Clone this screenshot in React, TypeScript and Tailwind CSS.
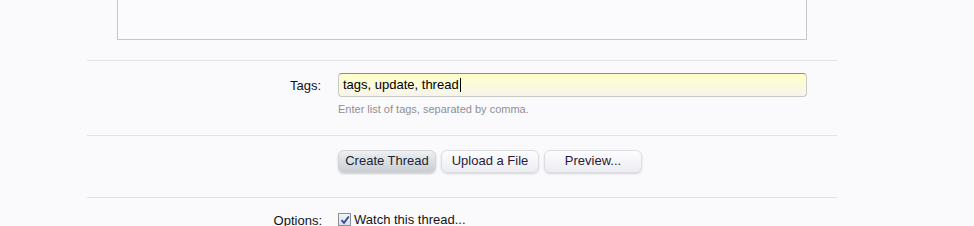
export default function App() {
  return (
    <div className="h-[226px] overflow-hidden bg-[#fafafd] text-[13px] text-[#141414]" style={{ fontFamily: '"Liberation Sans", Arial, sans-serif' }}>
      <div className="ml-[87px] w-[750px]">
        {/* tail of the message editor */}
        <div className="pb-[20px]">
          <div className="ml-[30px] h-[40px] w-[690px] border border-t-0 border-[#c6c6cc] bg-[#fbfbfe]" />
        </div>

        {/* Tags */}
        <div className="flex border-t border-[#e2e2e8] pt-[12px] pb-[17px]">
          <div className="w-[235px] pt-[3px] pr-[1px] text-right">Tags:</div>
          <div className="ml-[16px] w-[469px]">
            <div className="flex h-[24px] items-center rounded-[4px] border border-[#c9c9c4] border-t-[#8c8c8c] bg-gradient-to-b from-[#ffffc8] to-[#f7f5ec] px-[4px] text-[#000]">
              tags, update, thread
              <span className="ml-[1px] inline-block h-[14px] w-px bg-black" />
            </div>
            <div className="mt-[4px] text-[11px] text-[#8f8f94]">Enter list of tags, separated by comma.</div>
          </div>
        </div>

        {/* buttons */}
        <div className="flex gap-[5px] border-t border-[#e2e2e8] pl-[251px] pt-[14px] pb-[24px]">
          <button className="h-[23px] w-[98px] rounded-[6px] border border-[#d2d4d8] bg-gradient-to-b from-[#eef0f2] to-[#c9cdd2] text-[13px] text-[#1c2530] shadow-[0_1px_2px_rgba(0,0,0,0.2)]">
            Create Thread
          </button>
          <button className="h-[23px] w-[98px] rounded-[6px] border border-[#dcdce2] bg-gradient-to-b from-[#fdfdff] to-[#ecedf1] text-[13px] text-[#2a1a3a] shadow-[0_1px_2px_rgba(0,0,0,0.15)]">
            Upload a File
          </button>
          <button className="h-[23px] w-[98px] rounded-[6px] border border-[#dcdce2] bg-gradient-to-b from-[#fdfdff] to-[#ecedf1] text-[13px] text-[#2a1a3a] shadow-[0_1px_2px_rgba(0,0,0,0.15)]">
            Preview...
          </button>
        </div>

        {/* options */}
        <div className="flex border-t border-[#e2e2e8] pt-[12px]">
          <div className="w-[235px] pt-[1px] text-right">Options:</div>
          <div className="ml-[16px] flex items-center gap-[3px]">
            <span className="flex h-[13px] w-[13px] items-center justify-center border border-[#8a8f99] bg-gradient-to-b from-[#f4f4f6] to-[#dcdfe4]">
              <svg viewBox="0 0 10 10" className="h-[10px] w-[10px]">
                <path d="M1.5 5.2 L4 7.8 L8.8 1.5" fill="none" stroke="#2c4a9c" strokeWidth="1.8" />
              </svg>
            </span>
            <span>Watch this thread...</span>
          </div>
        </div>
      </div>
    </div>
  );
}
